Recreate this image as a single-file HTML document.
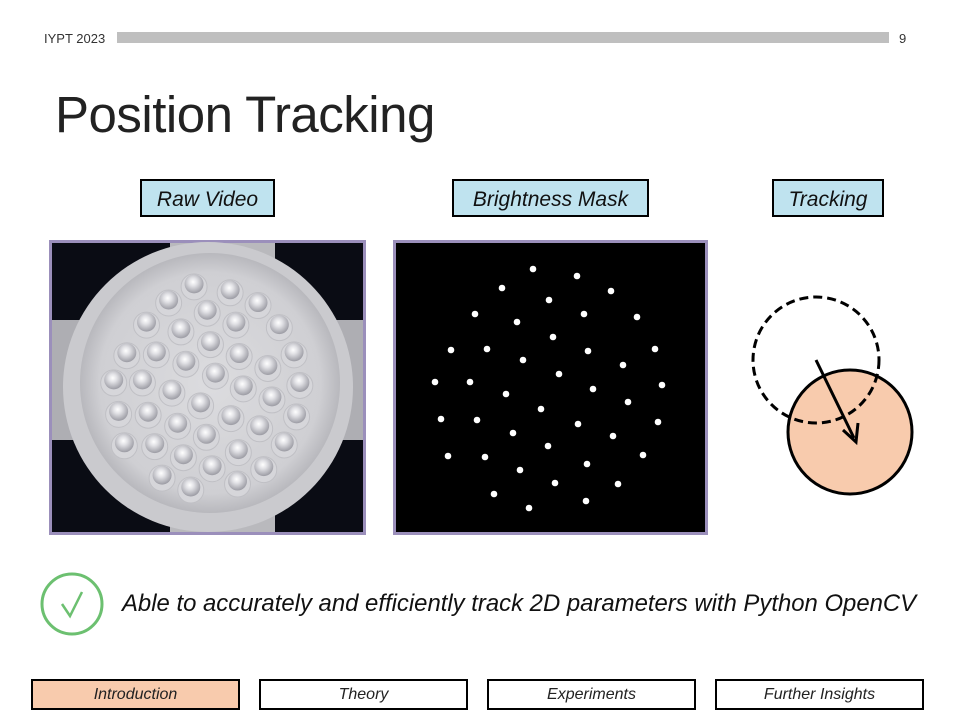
<!DOCTYPE html>
<html><head><meta charset="utf-8"><style>
body{margin:0;width:960px;height:720px;background:#fff;position:relative;overflow:hidden;font-family:"Liberation Sans",sans-serif}
.a{position:absolute}
.lab{position:absolute;background:#bfe3ef;border:2px solid #000;font-style:italic;font-size:21px;text-align:center;line-height:38px;height:38px;box-sizing:border-box;color:#111}
.nav{position:absolute;top:679px;height:31px;width:209px;border:2px solid #000;box-sizing:border-box;font-style:italic;font-size:16px;text-align:center;line-height:27px;color:#222}
</style></head><body>
<div class="a" style="left:44px;top:31px;font-size:13px;color:#333">IYPT 2023</div>
<div class="a" style="left:117px;top:32px;width:772px;height:11px;background:#bfbfbf"></div>
<div class="a" style="left:899px;top:31px;font-size:13px;color:#333">9</div>
<div class="a" style="left:55px;top:85px;font-size:51px;color:#222;letter-spacing:-0.5px">Position Tracking</div>
<div class="lab" style="left:140px;top:179px;width:135px">Raw Video</div>
<div class="lab" style="left:452px;top:179px;width:197px">Brightness Mask</div>
<div class="lab" style="left:772px;top:179px;width:112px">Tracking</div>
<svg class="a" style="left:0;top:0" width="960" height="720">
<defs>
<radialGradient id="pg" cx="0.45" cy="0.4" r="0.6"><stop offset="0" stop-color="#fff"/><stop offset="0.35" stop-color="#e2e2e6"/><stop offset="1" stop-color="#9c9ca4"/></radialGradient>
<radialGradient id="dg" cx="0.5" cy="0.5" r="0.5"><stop offset="0" stop-color="#dcdcdf"/><stop offset="0.85" stop-color="#cfcfd3"/><stop offset="1" stop-color="#b8b8bd"/></radialGradient>
</defs>
<rect x="50.5" y="241.5" width="314" height="292" fill="#0a0c14" stroke="#9b8fbb" stroke-width="3"/>
<rect x="170" y="243" width="105" height="289" fill="#b9b9bd"/>
<rect x="52" y="320" width="311" height="120" fill="#aeaeb3"/>
<circle cx="208" cy="387" r="145" fill="#cacace"/>
<circle cx="210" cy="383" r="130" fill="url(#dg)"/>
<g id="pearls"></g>
<rect x="394.5" y="241.5" width="312" height="292" fill="#000" stroke="#9b8fbb" stroke-width="3"/>
<g id="dots" fill="#fff"></g>
<circle cx="850" cy="432" r="62" fill="#f8cbad" stroke="#000" stroke-width="3"/>
<circle cx="816" cy="360" r="63" fill="none" stroke="#000" stroke-width="3" stroke-dasharray="9 5"/>
<line x1="816" y1="360" x2="854" y2="438" stroke="#000" stroke-width="3"/>
<polyline points="843,430 856,442 858,423" fill="none" stroke="#000" stroke-width="3"/>
<circle cx="72" cy="604" r="30" fill="none" stroke="#6cc070" stroke-width="3"/>
<polyline points="62,604 70,616 82,592" fill="none" stroke="#6cc070" stroke-width="2.5"/>
</svg>
<div class="a" style="left:122px;top:590px;font-size:23.9px;font-style:italic;color:#111;white-space:nowrap">Able to accurately and efficiently track 2D parameters with Python OpenCV</div>
<div class="nav" style="left:31px;background:#f8cbad">Introduction</div>
<div class="nav" style="left:259px">Theory</div>
<div class="nav" style="left:487px">Experiments</div>
<div class="nav" style="left:715px">Further Insights</div>
<script>
var d=[[533,269],[577,276],[502,288],[611,291],[549,300],[475,314],[584,314],[637,317],[517,322],[553,337],[451,350],[487,349],[588,351],[655,349],[523,360],[623,365],[559,374],[435,382],[470,382],[662,385],[593,389],[506,394],[628,402],[541,409],[441,419],[477,420],[578,424],[658,422],[513,433],[613,436],[548,446],[448,456],[485,457],[643,455],[587,464],[520,470],[555,483],[618,484],[494,494],[586,501],[529,508]];
var s='',p='';
d.forEach(function(q){s+='<circle cx="'+q[0]+'" cy="'+q[1]+'" r="3.3"/>';
var x=208+(q[0]-550)*0.82,y=385+(q[1]-388)*0.85;
p+='<circle cx="'+x+'" cy="'+(y+3)+'" r="13" fill="#d6d6da" stroke="#c0c0c5"/><circle cx="'+x+'" cy="'+y+'" r="9.5" fill="url(#pg)"/>';});
document.getElementById('dots').innerHTML=s;document.getElementById('pearls').innerHTML=p;
</script>
</body></html>
